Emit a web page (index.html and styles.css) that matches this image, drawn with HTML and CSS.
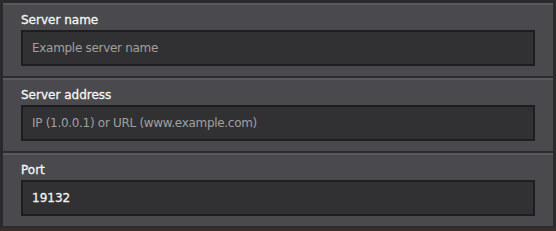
FILE: index.html
```html
<!DOCTYPE html>
<html lang="en">
<head>
  <meta charset="UTF-8">
  <meta name="viewport" content="width=device-width, initial-scale=1.0">
  <title>Add Server</title>
  <link rel="stylesheet" href="styles.css">
</head>
<body>

  <div class="server-form">
    <div class="field">
      <label class="field-label" for="serverName">Server name</label>
      <input class="field-input" id="serverName" type="text" placeholder="Example server name">
    </div>

    <div class="field">
      <label class="field-label" for="serverAddress">Server address</label>
      <input class="field-input" id="serverAddress" type="text" placeholder="IP (1.0.0.1) or URL (www.example.com)">
    </div>

    <div class="field">
      <label class="field-label" for="serverPort">Port</label>
      <input class="field-input" id="serverPort" type="text" value="19132">
    </div>
  </div>

</body>
</html>
```

FILE: styles.css
```css
body {
  margin: 0;
  background-color: #3a2e29;
  font-family: 'DejaVu Sans', sans-serif;
}

.server-form {
  width: 556px;
  box-sizing: border-box;
  border: 3px solid #2a2a2d;
  border-bottom: none;
  background-color: #4a4a4e;
}

.field {
  display: flex;
  flex-direction: column;
  padding: 7px 18px 10px;
  border-top: 2px solid #5a5a5e;
  border-bottom: 2px solid #2c2c2f;
}

.field-label {
  font-size: 12px;
  line-height: 16px;
  color: #f6f6f6;
  margin-bottom: 2px;
  -webkit-text-stroke: 0.3px #f6f6f6;
}

.field-input {
  height: 36px;
  box-sizing: border-box;
  margin: 0;
  padding: 0 9px;
  border: 2px solid #1e1e20;
  background-color: #313133;
  color: #f0f0f0;
  font-family: 'DejaVu Sans', sans-serif;
  font-size: 12px;
  outline: none;
  -webkit-text-stroke: 0.3px #f0f0f0;
}

.field-input::placeholder {
  color: #a0a0a0;
  letter-spacing: -0.3px;
  -webkit-text-stroke: 0;
}
```
